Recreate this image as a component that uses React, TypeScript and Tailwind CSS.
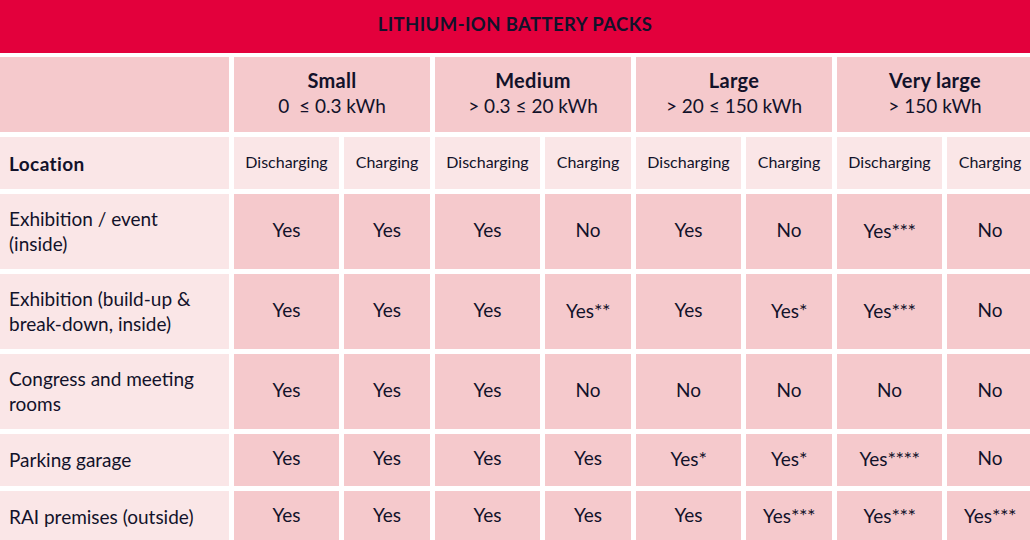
import React from "react";

const groups = [
  { name: "Small", range: "0 \u00a0\u2264 0.3 kWh" },
  { name: "Medium", range: "> 0.3 \u2264 20 kWh" },
  { name: "Large", range: "> 20 \u2264 150 kWh" },
  { name: "Very large", range: "> 150 kWh" },
];

const rows: { label: string[]; values: string[] }[] = [
  { label: ["Exhibition / event", "(inside)"], values: ["Yes", "Yes", "Yes", "No", "Yes", "No", "Yes***", "No"] },
  { label: ["Exhibition (build-up &", "break-down, inside)"], values: ["Yes", "Yes", "Yes", "Yes**", "Yes", "Yes*", "Yes***", "No"] },
  { label: ["Congress and meeting", "rooms"], values: ["Yes", "Yes", "Yes", "No", "No", "No", "No", "No"] },
  { label: ["Parking garage"], values: ["Yes", "Yes", "Yes", "Yes", "Yes*", "Yes*", "Yes****", "No"] },
  { label: ["RAI premises (outside)"], values: ["Yes", "Yes", "Yes", "Yes", "Yes", "Yes***", "Yes***", "Yes***"] },
];

function Value({ v }: { v: string }) {
  const base = v.replace(/\*+$/, "");
  const stars = v.slice(base.length);
  return (
    <span className="text-[19px]">
      {base}
      {stars && <span className="text-[20px] tracking-[-0.5px]">{stars}</span>}
    </span>
  );
}

export default function App() {
  return (
    <div
      className="w-[1030px] h-[540px] overflow-hidden bg-white text-[#12122a]"
      style={{ fontFamily: "Lato, 'Open Sans', sans-serif" }}
    >
      <div className="h-[53px] bg-[#e3003c] flex items-center justify-center pb-[4px]">
        <span className="text-[18.5px] font-bold tracking-[0.4px]">LITHIUM-ION BATTERY PACKS</span>
      </div>
      <div className="mt-[4px] w-[1033px] grid grid-cols-[229px_105px_86px_105px_86px_105px_86px_105px_86px] grid-rows-[75px_52px_75px_75px_75px_52px_52px] gap-[5px]">
        <div className="bg-[#f5c9cc]" />
        {groups.map((g) => (
          <div key={g.name} className="col-span-2 bg-[#f5c9cc] flex flex-col items-center justify-center leading-[25px] pb-[3px]">
            <span className="text-[20px] font-bold tracking-[0.3px]">{g.name}</span>
            <span className="text-[19px]">{g.range}</span>
          </div>
        ))}
        <div className="bg-[#fae6e7] flex items-center pl-[9px] pt-[3px]">
          <span className="text-[19px] font-bold tracking-[0.4px]">Location</span>
        </div>
        {groups.map((g) => (
          <React.Fragment key={g.name + "sub"}>
            <div className="bg-[#fae6e7] flex items-center justify-center pb-[3px]">
              <span className="text-[16px]">Discharging</span>
            </div>
            <div className="bg-[#fae6e7] flex items-center justify-center pb-[3px]">
              <span className="text-[16px]">Charging</span>
            </div>
          </React.Fragment>
        ))}
        {rows.map((r, i) => (
          <React.Fragment key={i}>
            <div className="bg-[#fae6e7] flex flex-col justify-center pl-[9px] leading-[25px] pb-[2px]">
              {r.label.map((l) => (
                <span key={l} className="text-[19px]">{l}</span>
              ))}
            </div>
            {r.values.map((v, j) => (
              <div key={j} className="bg-[#f5c9cc] flex items-center justify-center pb-[3px]">
                <Value v={v} />
              </div>
            ))}
          </React.Fragment>
        ))}
      </div>
    </div>
  );
}
